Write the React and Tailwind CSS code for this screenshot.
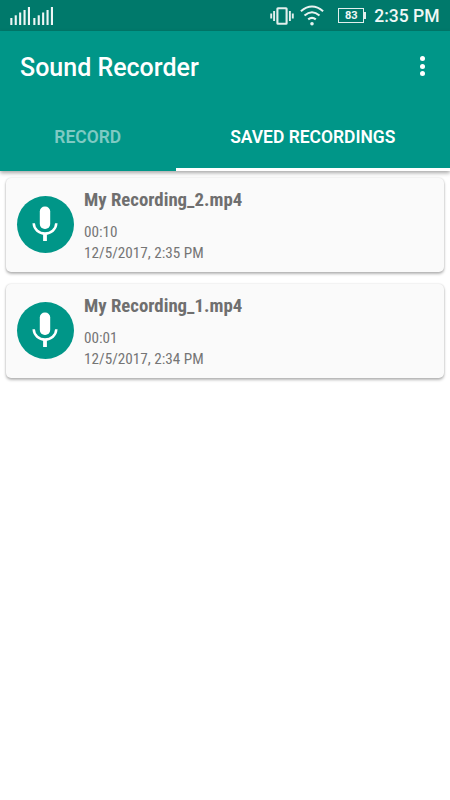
const TABS = [
  { id: "record", label: "RECORD" },
  { id: "saved", label: "SAVED RECORDINGS" },
];

const RECORDINGS = [
  { name: "My Recording_2.mp4", length: "00:10", date: "12/5/2017, 2:35 PM" },
  { name: "My Recording_1.mp4", length: "00:01", date: "12/5/2017, 2:34 PM" },
];

const SIGNAL_BARS = [7, 9.7, 12.5, 15, 18];

function SignalIcon() {
  return (
    <svg width="20.5" height="18" viewBox="0 0 20.5 18" fill="#eef6f5" aria-hidden="true">
      {SIGNAL_BARS.map((height, i) => (
        <rect key={height} x={0.3 + i * 4.4} y={18 - height} width="2.1" height={height} />
      ))}
    </svg>
  );
}

function VibrateIcon() {
  return (
    <svg width="24" height="18" viewBox="0 0 24 18" stroke="#e2efed" fill="none" aria-hidden="true">
      <rect x="7.4" y="1.2" width="9.2" height="15.6" rx="0.6" strokeWidth="2.1" />
      <path d="M1.2 6.5v5M4.1 4v10M19.9 4v10M22.8 6.5v5" strokeWidth="1.9" />
    </svg>
  );
}

function WifiIcon() {
  return (
    <svg width="24" height="21" viewBox="0 0 24 21" stroke="#e8f3f1" fill="none" aria-hidden="true">
      <path d="M.9 6.2Q12-3.2 23.1 6.2M4.5 10.5Q12 4 19.5 10.5M8.2 14.4Q12 11.2 15.8 14.4" strokeWidth="2.1" />
      <circle cx="12" cy="18.7" r="1.8" fill="#e8f3f1" stroke="none" />
    </svg>
  );
}

function MicIcon() {
  return (
    <svg width="26" height="36" viewBox="0 0 26 36" fill="none" aria-hidden="true">
      <rect x="7.8" y="0.5" width="10.4" height="22.5" rx="5" fill="#fff" />
      <path d="M1.7 17.3C2 23.4 7 27.5 13 27.5S24 23.4 24.3 17.3" stroke="#fff" strokeWidth="2.5" />
      <path d="M13 27v8" stroke="#fff" strokeWidth="3.8" />
    </svg>
  );
}

function StatusBar() {
  return (
    <div className="flex h-[31px] items-center bg-[#00796b] pr-[10.5px] pl-[10px] text-[#f0f7f6]">
      <div className="flex gap-[2.5px]">
        <SignalIcon />
        <SignalIcon />
      </div>
      <div className="ml-auto flex items-center">
        <VibrateIcon />
        <span className="ml-[6px]">
          <WifiIcon />
        </span>
        <span className="ml-[14px] flex items-center">
          <span className="flex h-[15px] w-[26px] items-center justify-center border-[1.5px] border-[#e2efed] text-[11px] leading-none font-bold">
            83
          </span>
          <span className="h-[7px] w-[1.5px] bg-[#e2efed]" />
        </span>
        <span className="ml-[8.5px] pt-[3px] text-[17.5px] leading-none font-medium whitespace-nowrap">2:35 PM</span>
      </div>
    </div>
  );
}

function RecordingCard({ name, length, date }) {
  return (
    <li className="flex h-[93.5px] rounded-[5px] bg-[#fafafa] pl-[10.5px] shadow-[0_2px_3px_rgba(0,0,0,0.28),0_0_2px_rgba(0,0,0,0.16)]">
      <span className="mt-[17.5px] flex h-[57.5px] w-[57.5px] shrink-0 items-center justify-center rounded-full bg-[#009688]">
        <MicIcon />
      </span>
      <div className="ml-[10px] font-stretch-[75%] text-[#757575]">
        <p className="mt-[11px] text-[18.8px] leading-[22px] font-bold text-[#6f6f6f]">{name}</p>
        <p className="mt-[11px] text-[15.2px] leading-[20.5px]">{length}</p>
        <p className="text-[15.2px] leading-[20.5px]">{date}</p>
      </div>
    </li>
  );
}

export default function App() {
  const activeTab = "saved";

  return (
    <div className="min-h-screen w-full bg-white font-[Roboto,sans-serif]">
      <StatusBar />

      <header className="bg-[#009688] text-white shadow-[0_2px_4px_rgba(0,0,0,0.35)]">
        <div className="flex h-[73px] items-center justify-between pr-[25px] pl-[20px]">
          <h1 className="text-[25px] leading-none font-medium">Sound Recorder</h1>
          <button type="button" aria-label="More options" className="mb-[3px] flex flex-col gap-[2.5px]">
            <span className="h-[5px] w-[5px] rounded-full bg-white" />
            <span className="h-[5px] w-[5px] rounded-full bg-white" />
            <span className="h-[5px] w-[5px] rounded-full bg-white" />
          </button>
        </div>

        <nav className="flex h-[67px] text-[17.45px] leading-none font-semibold">
          {TABS.map(({ id, label }) => (
            <button
              key={id}
              type="button"
              className={`flex items-center justify-center border-b-[3px] pt-[3px] ${
                id === activeTab
                  ? "flex-1 border-white text-white"
                  : "w-[175.5px] border-transparent text-white/50"
              }`}
            >
              {label}
            </button>
          ))}
        </nav>
      </header>

      <ul className="flex flex-col gap-[12.5px] px-[6px] pt-[7px]">
        {RECORDINGS.map((recording) => (
          <RecordingCard key={recording.name} {...recording} />
        ))}
      </ul>
    </div>
  );
}
